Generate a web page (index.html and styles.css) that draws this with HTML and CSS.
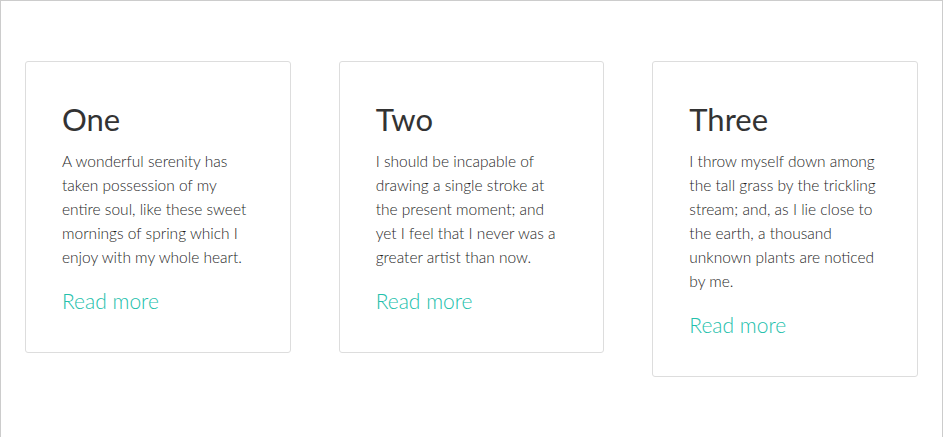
FILE: index.html
```html
<!DOCTYPE html>
<html lang="en">
<head>
<meta charset="utf-8">
<title>Cards</title>
<link rel="stylesheet" href="styles.css">
</head>
<body>
<main class="cards">
  <article class="card">
    <h2 class="card-title">One</h2>
    <p class="card-text">A wonderful serenity has taken possession of my entire soul, like these sweet mornings of spring which I enjoy with my whole heart.</p>
    <a class="card-link" href="#">Read more</a>
  </article>
  <article class="card">
    <h2 class="card-title">Two</h2>
    <p class="card-text">I should be incapable of drawing a single stroke at the present moment; and yet I feel that I never was a greater artist than now.</p>
    <a class="card-link" href="#">Read more</a>
  </article>
  <article class="card">
    <h2 class="card-title">Three</h2>
    <p class="card-text">I throw myself down among the tall grass by the trickling stream; and, as I lie close to the earth, a thousand unknown plants are noticed by me.</p>
    <a class="card-link" href="#">Read more</a>
  </article>
</main>
</body>
</html>
```

FILE: styles.css
```css
html, body {
  margin: 0;
  padding: 0;
}
body {
  box-sizing: border-box;
  min-height: 437px;
  border: 1px solid #cccccc;
  border-bottom: none;
  background: #ffffff;
  font-family: Lato, "Open Sans", sans-serif;
  color: #333333;
}
.cards {
  display: grid;
  grid-template-columns: repeat(3, 1fr);
  gap: 48px;
  align-items: start;
  padding: 60px 24px 0;
}
.card {
  border: 1px solid #dddddd;
  border-radius: 3px;
  padding: 37px 36px 36px;
}
.card-title {
  margin: 0 0 10px;
  font-size: 31px;
  font-weight: 400;
  line-height: 40px;
  color: #333333;
}
.card-text {
  margin: 0 0 17px;
  font-size: 15.5px;
  font-weight: 300;
  line-height: 24px;
  color: #1f1f1f;
}
.card-link {
  display: block;
  font-size: 21px;
  font-weight: 300;
  line-height: 30px;
  color: #22c0ab;
  text-decoration: none;
}
```
